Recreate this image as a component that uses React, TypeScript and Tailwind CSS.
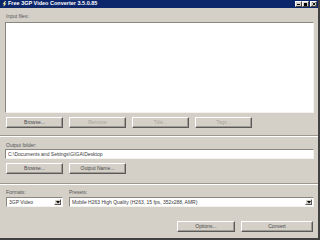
import React from "react";

const font = { fontFamily: '"Liberation Sans", Arial, sans-serif' };

function Btn({ w, label, disabled }: { w: string; label: string; disabled?: boolean }) {
  return (
    <div
      className={`${w} h-[11px] flex items-center justify-center border border-t-white border-l-white border-r-[#5a5a5a] border-b-[#5a5a5a] bg-[#d4d0c8] text-[5px] leading-none shadow-[inset_-1px_-1px_0_#a09c94] ${
        disabled ? "text-[#a8a49c]" : "text-[#4a4a4a]"
      }`}
    >
      {label}
    </div>
  );
}

function Sep() {
  return (
    <div className="w-[318px] -ml-[5px] flex flex-col">
      <div className="h-px bg-[#9c9890]" />
      <div className="h-px bg-white" />
    </div>
  );
}

function Combo({ w, text }: { w: string; text: string }) {
  return (
    <div className={`${w} h-[10px] flex items-stretch border border-t-[#8a8680] border-l-[#8a8680] border-r-[#f4f2ee] border-b-[#f4f2ee] bg-white`}>
      <div className="flex-1 flex items-center pl-[2px] text-[5px] leading-none text-[#3a3a3a] whitespace-nowrap overflow-hidden">
        {text}
      </div>
      <div className="w-[7px] my-[1px] mr-[1px] flex items-center justify-center bg-[#d4d0c8] border border-t-white border-l-white border-r-[#5a5a5a] border-b-[#5a5a5a]">
        <svg width="4" height="3" viewBox="0 0 4 3">
          <path d="M0 0 H4 L2 2.5 Z" fill="#000" />
        </svg>
      </div>
    </div>
  );
}

export default function App() {
  return (
    <div style={font} className="w-[320px] h-[240px] bg-[#d4d0c8] flex flex-col overflow-hidden border-r-2 border-b-2 border-r-[#404040] border-b-[#404040]">
      {/* title bar */}
      <div className="h-[8px] bg-[#0c266c] flex items-center pl-[2px] pr-[1px]">
        <svg width="5" height="6" viewBox="0 0 5 6" className="mr-[1px]">
          <path d="M3 0 L0.5 3.2 H2.2 L1.2 6 L4.5 2.5 H2.8 L4 0 Z" fill="#f4e9a0" />
        </svg>
        <span className="text-white font-bold text-[5.5px] leading-none whitespace-nowrap">
          Free 3GP Video Converter 3.5.0.85
        </span>
        <div className="flex-1" />
        <div className="flex items-center gap-0">
          <div className="w-[7px] h-[6px] bg-[#d4d0c8] border-t border-l border-white border-r border-b border-r-[#404040] border-b-[#404040] flex items-end justify-center pb-[1px]">
            <div className="w-[3px] h-px bg-black" />
          </div>
          <div className="w-[7px] h-[6px] bg-[#d4d0c8] border-t border-l border-white border-r border-b border-r-[#404040] border-b-[#404040] flex items-center justify-center">
            <div className="w-[3px] h-[3px] border border-black border-t-2" />
          </div>
          <div className="ml-[1px] w-[7px] h-[6px] bg-[#d4d0c8] border-t border-l border-white border-r border-b border-r-[#404040] border-b-[#404040] flex items-center justify-center">
            <svg width="4" height="4" viewBox="0 0 4 4">
              <path d="M0.5 0.5 L3.5 3.5 M3.5 0.5 L0.5 3.5" stroke="#000" strokeWidth="0.9" />
            </svg>
          </div>
        </div>
      </div>

      <div className="flex flex-col pl-[5px]">
        <div className="mt-[5px] h-[6px] pl-[1px] text-[5px] leading-[6px] text-[#555]">Input files:</div>
        <div className="mt-[3px] w-[309px] h-[91px] bg-white border border-t-[#8a8680] border-l-[#8a8680] border-r-[#f4f2ee] border-b-[#f4f2ee]" />
        <div className="mt-[4px] ml-[1px] flex gap-[6px]">
          <Btn w="w-[57px]" label="Browse..." />
          <Btn w="w-[57px]" label="Remove" disabled />
          <Btn w="w-[57px]" label="Title..." disabled />
          <Btn w="w-[57px]" label="Tags..." disabled />
        </div>
        <div className="mt-[7px]">
          <Sep />
        </div>
        <div className="mt-[5px] h-[6px] pl-[1px] text-[5px] leading-[6px] text-[#555]">Output folder:</div>
        <div className="mt-[1px] w-[309px] h-[10px] bg-white border border-t-[#8a8680] border-l-[#8a8680] border-r-[#f4f2ee] border-b-[#f4f2ee] flex items-center pl-[2px] text-[5px] leading-none text-[#3a3a3a]">
          C:\Documents and Settings\GIGA\Desktop
        </div>
        <div className="mt-[4px] ml-[1px] flex gap-[6px]">
          <Btn w="w-[57px]" label="Browse..." />
          <Btn w="w-[57px]" label="Output Name..." />
        </div>
        <div className="mt-[9px]">
          <Sep />
        </div>
        <div className="mt-[4px] h-[6px] ml-[1px] flex gap-[6px] text-[5px] leading-[6px] text-[#555]">
          <div className="w-[57px]">Formats:</div>
          <div>Presets:</div>
        </div>
        <div className="mt-[2px] ml-[1px] flex gap-[6px]">
          <Combo w="w-[57px]" text="3GP Video" />
          <Combo w="w-[245px]" text="Mobile H263 High Quality (H263, 15 fps, 352x288, AMR)" />
        </div>
        <div className="mt-[14px] flex gap-[6px] pl-[172px]">
          <Btn w="w-[58px]" label="Options..." />
          <Btn w="w-[72px]" label="Convert" />
        </div>
      </div>
    </div>
  );
}
